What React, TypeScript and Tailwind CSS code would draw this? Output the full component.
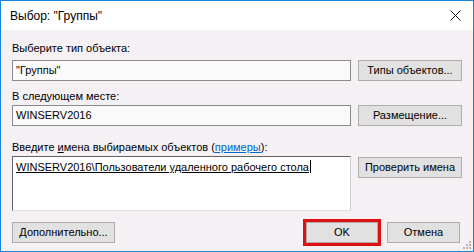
import React from 'react'

const ui = { fontFamily: '"Liberation Sans", Arial, sans-serif' }

function Btn({ children, className = '' }: { children: React.ReactNode; className?: string }) {
  return (
    <div
      className={
        'flex h-[21px] items-center justify-center border border-[#adadad] bg-[#e1e1e1] text-[11px] text-black ' +
        className
      }
    >
      {children}
    </div>
  )
}

export default function App() {
  return (
    <div
      className="flex h-[252px] w-[474px] flex-col border border-[#1883d7] bg-[#f4f0f4] text-black"
      style={ui}
    >
      {/* title bar */}
      <div className="flex h-[29px] shrink-0 items-center justify-between bg-white pl-[9px] pr-[11px]">
        <span className="text-[12px]">Выбор: "Группы"</span>
        <svg width="11" height="11" viewBox="0 0 11 11" className="mr-[1px]">
          <path d="M0.5 0.5 L10.5 10.5 M10.5 0.5 L0.5 10.5" stroke="#111" strokeWidth="1" />
        </svg>
      </div>

      {/* body */}
      <div className="relative flex flex-1 flex-col pl-[11px] pr-[11px] pt-[11px] text-[11px]">
        <div className="h-[14px] leading-[14px]">Выберите тип объекта:</div>
        <div className="mt-[5px] flex gap-[7px]">
          <div className="flex h-[21px] w-[339px] items-center border border-[#8a8a8a] bg-[#fbfafb] pl-[3px]">
            "Группы"
          </div>
          <Btn className="w-[104px]">Типы объектов...</Btn>
        </div>

        <div className="mt-[8px] h-[14px] leading-[14px]">В следующем месте:</div>
        <div className="mt-[2px] flex gap-[7px]">
          <div className="flex h-[21px] w-[339px] items-center border border-[#8a8a8a] bg-[#fbfafb] pl-[3px]">
            WINSERV2016
          </div>
          <Btn className="w-[104px]">Размещение...</Btn>
        </div>

        <div className="mt-[14px] h-[14px] leading-[14px]">
          Введите <span className="underline">и</span>мена выбираемых объектов (
          <span className="text-[#0066cc] underline">примеры</span>):
        </div>
        <div className="mt-[2px] flex items-start gap-[7px]">
          <div className="h-[55px] w-[339px] border-b border-l border-r border-t border-b-[#e3e3e3] border-l-[#646464] border-r-[#d0d0d0] border-t-[#646464] bg-white pl-[3px] pt-[1px]">
            <span className="underline">WINSERV2016\Пользователи удаленного рабочего стола</span>
            <span className="ml-[1px] inline-block h-[13px] w-px translate-y-[2px] bg-black" />
          </div>
          <Btn className="mt-px w-[104px]">Проверить имена</Btn>
        </div>

        <div className="mt-[8px] flex items-center">
          <Btn className="w-[103px]">Дополнительно...</Btn>
          <div className="ml-[188px] border-[3px] border-[#e01010]">
            <Btn className="w-[72px]">OK</Btn>
          </div>
          <Btn className="ml-[6px] w-[73px]">Отмена</Btn>
        </div>

        {/* resize grip */}
        <svg width="10" height="10" viewBox="0 0 10 10" className="absolute bottom-[1px] right-[1px]">
          <g fill="#b5b5b5">
            <rect x="7" y="1" width="2" height="2" />
            <rect x="4" y="4" width="2" height="2" />
            <rect x="7" y="4" width="2" height="2" />
            <rect x="1" y="7" width="2" height="2" />
            <rect x="4" y="7" width="2" height="2" />
            <rect x="7" y="7" width="2" height="2" />
          </g>
        </svg>
      </div>
    </div>
  )
}
